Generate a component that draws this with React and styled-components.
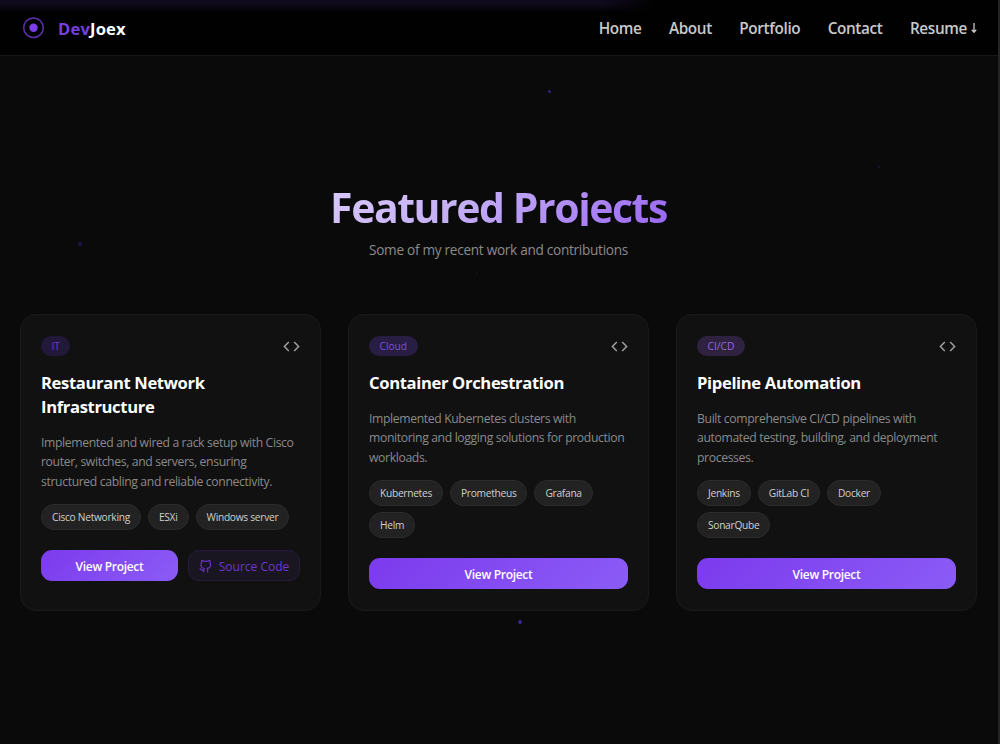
import React from "react"
import styled, { createGlobalStyle } from "styled-components"

const GlobalStyle = createGlobalStyle`
  * {
    box-sizing: border-box;
  }
  html {
    background: #0a0a0a;
  }
  body {
    margin: 0;
    background: #0a0a0a;
    color: #ffffff;
    font-family: "Open Sans", "Noto Sans", sans-serif;
    overflow: hidden;
  }
`

const Page = styled.div`
  position: relative;
  height: 744px;
  overflow: hidden;
  border-right: 2px solid #242426;
`

const Nav = styled.nav`
  display: flex;
  align-items: center;
  justify-content: space-between;
  height: 56px;
  padding: 1px 21px 0 22px;
  background: linear-gradient(90deg, transparent 600px, #010101 655px) top /
      100% 14px no-repeat,
    linear-gradient(180deg, #110b1f 0, #0e091a 5px, #010101 12px);
  border-bottom: 1px solid #161616;
`

const Brand = styled.div`
  display: flex;
  align-items: center;
  gap: 13px;
  font-size: 16.6px;
  font-weight: 700;
  letter-spacing: 0.15px;
`

const BrandAccent = styled.span`
  color: #7440de;
`

const NavLinks = styled.div`
  display: flex;
  gap: 27.4px;
`

const NavLink = styled.a`
  display: flex;
  align-items: center;
  gap: 4px;
  color: #c9c9c9;
  font-size: 15.3px;
  font-weight: 650;
  letter-spacing: -0.35px;
`

const Section = styled.section`
  padding: 133px 21px 0 20px;
`

const SectionHead = styled.header`
  display: flex;
  flex-direction: column;
  align-items: center;
`

const Heading = styled.h1`
  margin: 0;
  height: 37px;
  font-size: 41px;
  font-weight: 700;
  line-height: 36px;
  letter-spacing: -1.45px;
  background: linear-gradient(135deg, #d8c8fa 0%, #c4aef5 40%, #9a67f3 100%);
  background-clip: text;
  -webkit-background-clip: text;
  color: transparent;
`

const Subtitle = styled.p`
  margin: 13px 0 0;
  color: #8b8b8b;
  font-size: 13.6px;
  line-height: 22px;
  letter-spacing: -0.28px;
`

const Grid = styled.div`
  display: grid;
  grid-template-columns: repeat(3, 1fr);
  gap: 27px;
  margin-top: 53px;
`

const Card = styled.article`
  height: 297px;
  padding: 21px 20px 20px;
  background: #111111;
  border: 1px solid #1a1a1a;
  border-radius: 16px;
`

const CardTop = styled.div`
  display: flex;
  align-items: center;
  justify-content: space-between;
  height: 20px;
`

const Badge = styled.span`
  display: flex;
  align-items: center;
  height: 20px;
  padding: 0 10.5px;
  border-radius: 10px;
  background: ${(props) => props.$background};
  color: ${(props) => props.$color};
  font-size: 10.2px;
  font-weight: 500;
`

const CardTitle = styled.h2`
  margin: 15px 0 0;
  font-size: 16.6px;
  font-weight: 700;
  line-height: 24px;
  letter-spacing: -0.35px;
`

const Description = styled.p`
  margin: 13.5px 0 0;
  color: #8a8a8a;
  font-size: 12.2px;
  line-height: 19.8px;
  letter-spacing: -0.36px;
`

const Tags = styled.div`
  display: flex;
  flex-wrap: wrap;
  gap: 6px 7px;
  margin-top: 12px;
`

const Tag = styled.span`
  display: flex;
  align-items: center;
  height: 26px;
  padding: 0 10px;
  border: 1px solid #2b2b2b;
  border-radius: 13px;
  background: #222222;
  color: #cfcfcf;
  font-size: 10.2px;
  font-weight: 500;
  letter-spacing: -0.28px;
`

const Actions = styled.div`
  display: flex;
  gap: 10px;
  margin-top: 20.4px;
`

const Button = styled.button`
  display: flex;
  flex: ${(props) => (props.$outlined ? "0 0 112px" : "1")};
  align-items: center;
  justify-content: center;
  gap: 7px;
  height: 31px;
  padding: 2px 0 0;
  border: ${(props) => (props.$outlined ? "1px solid #251a3c" : "0")};
  border-radius: 11px;
  background: ${(props) =>
    props.$outlined ? "#1a1621" : "linear-gradient(135deg, #7c3aed, #8b5cf6)"};
  color: ${(props) => (props.$outlined ? "#6f35d3" : "#ffffff")};
  font-family: inherit;
  font-size: 12px;
  font-weight: ${(props) => (props.$outlined ? 500 : 650)};
  letter-spacing: ${(props) => (props.$outlined ? "0" : "-0.3px")};
`

// decorative dots floating behind the content
const Particle = styled.i`
  position: absolute;
  left: ${(props) => props.$x}px;
  top: ${(props) => props.$y}px;
  width: ${(props) => props.$size}px;
  height: ${(props) => props.$size}px;
  border-radius: 50%;
  background: ${(props) => props.$color};
`

const LogoIcon = () => (
  <svg width="23" height="23" viewBox="0 0 23 23" fill="none">
    <circle cx="11.5" cy="10.7" r="9.8" stroke="#5b30a8" strokeWidth="1.5" />
    <circle cx="11.5" cy="10.7" r="4.2" fill="#7c3fe8" />
  </svg>
)

const ArrowIcon = () => (
  <svg width="6" height="12" viewBox="0 0 6 12" fill="none">
    <path d="M3 1v9M0.8 7.8 3 10.2l2.2-2.4" stroke="#c9c9c9" strokeWidth="1.3" />
  </svg>
)

const CodeIcon = () => (
  <svg width="17" height="12" viewBox="0 0 17 12" fill="none">
    <path
      d="M5.8 1.9 1.4 6.4l4.4 4.5M11.2 1.9l4.4 4.5-4.4 4.5"
      stroke="#a0a0a0"
      strokeWidth="1.5"
    />
  </svg>
)

const GithubIcon = () => (
  <svg
    width="13"
    height="13"
    viewBox="0 0 24 24"
    fill="none"
    stroke="currentColor"
    strokeWidth="2"
    strokeLinecap="round"
    strokeLinejoin="round"
  >
    <path d="M9 19c-5 1.5-5-2.5-7-3m14 6v-3.87a3.37 3.37 0 0 0-.94-2.61c3.14-.35 6.44-1.54 6.44-7A5.44 5.44 0 0 0 20 4.77 5.07 5.07 0 0 0 19.91 1S18.73.65 16 2.48a13.38 13.38 0 0 0-7 0C6.27.65 5.09 1 5.09 1A5.07 5.07 0 0 0 5 4.77a5.44 5.44 0 0 0-1.5 3.78c0 5.42 3.3 6.61 6.44 7A3.37 3.37 0 0 0 9 18.13V22" />
  </svg>
)

const links = ["Home", "About", "Portfolio", "Contact"]

const projects = [
  {
    category: "IT",
    color: "#6d35d2",
    background: "#21183a",
    title: "Restaurant Network Infrastructure",
    description:
      "Implemented and wired a rack setup with Cisco router, switches, and servers, ensuring structured cabling and reliable connectivity.",
    tags: ["Cisco Networking", "ESXi", "Windows server"],
    source: true,
  },
  {
    category: "Cloud",
    color: "#7b4fe0",
    background: "#281d42",
    title: "Container Orchestration",
    description:
      "Implemented Kubernetes clusters with monitoring and logging solutions for production workloads.",
    tags: ["Kubernetes", "Prometheus", "Grafana", "Helm"],
  },
  {
    category: "CI/CD",
    color: "#9568dc",
    background: "#2e2240",
    title: "Pipeline Automation",
    description:
      "Built comprehensive CI/CD pipelines with automated testing, building, and deployment processes.",
    tags: ["Jenkins", "GitLab CI", "Docker", "SonarQube"],
  },
]

const particles = [
  { x: 548, y: 90, size: 3, color: "#35217a" },
  { x: 78, y: 242, size: 4, color: "#211650" },
  { x: 878, y: 166, size: 2, color: "#1e1638" },
  { x: 476, y: 272, size: 2, color: "#171221" },
  { x: 518, y: 620, size: 4, color: "#3b238a" },
]

const ProjectCard = ({ project }) => (
  <Card>
    <CardTop>
      <Badge $color={project.color} $background={project.background}>
        {project.category}
      </Badge>
      <CodeIcon />
    </CardTop>
    <CardTitle>{project.title}</CardTitle>
    <Description>{project.description}</Description>
    <Tags>
      {project.tags.map((tag) => (
        <Tag key={tag}>{tag}</Tag>
      ))}
    </Tags>
    <Actions>
      <Button>View Project</Button>
      {project.source && (
        <Button $outlined>
          <GithubIcon />
          Source Code
        </Button>
      )}
    </Actions>
  </Card>
)

const App = () => {
  return (
    <Page>
      <GlobalStyle />
      {particles.map((p) => (
        <Particle key={p.x} $x={p.x} $y={p.y} $size={p.size} $color={p.color} />
      ))}
      <Nav>
        <Brand>
          <LogoIcon />
          <span>
            <BrandAccent>Dev</BrandAccent>Joex
          </span>
        </Brand>
        <NavLinks>
          {links.map((link) => (
            <NavLink key={link}>{link}</NavLink>
          ))}
          <NavLink>
            Resume
            <ArrowIcon />
          </NavLink>
        </NavLinks>
      </Nav>
      <Section>
        <SectionHead>
          <Heading>Featured Projects</Heading>
          <Subtitle>Some of my recent work and contributions</Subtitle>
        </SectionHead>
        <Grid>
          {projects.map((project) => (
            <ProjectCard key={project.title} project={project} />
          ))}
        </Grid>
      </Section>
    </Page>
  )
}

export default App
